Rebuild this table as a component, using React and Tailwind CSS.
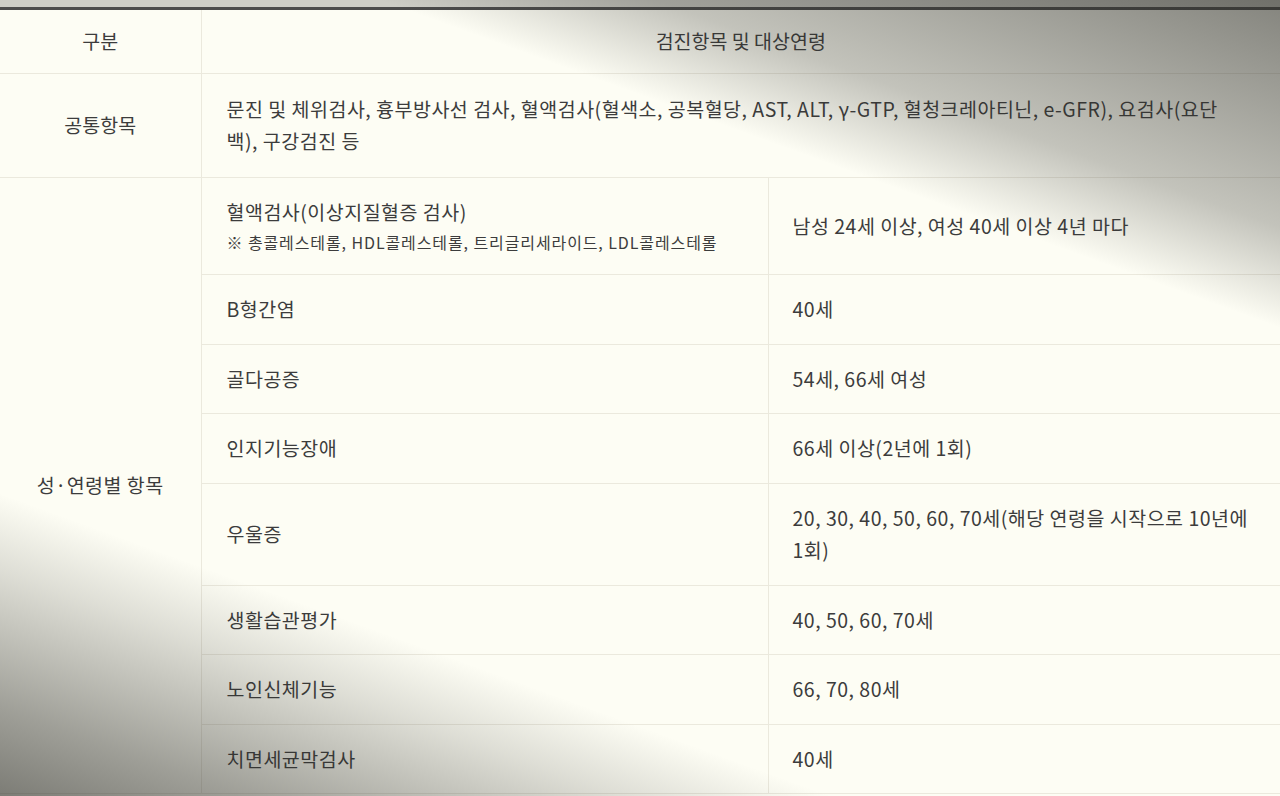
import React from 'react';

const rows = [
  { item: '혈액검사(이상지질혈증 검사)', note: '※ 총콜레스테롤, HDL콜레스테롤, 트리글리세라이드, LDL콜레스테롤', target: '남성 24세 이상, 여성 40세 이상 4년 마다' },
  { item: 'B형간염', target: '40세' },
  { item: '골다공증', target: '54세, 66세 여성' },
  { item: '인지기능장애', target: '66세 이상(2년에 1회)' },
  { item: '우울증', target: '20, 30, 40, 50, 60, 70세(해당 연령을 시작으로 10년에 1회)' },
  { item: '생활습관평가', target: '40, 50, 60, 70세' },
  { item: '노인신체기능', target: '66, 70, 80세' },
  { item: '치면세균막검사', target: '40세' },
];

const cell = 'border-b border-[#ebe9dd] align-middle';

export default function App() {
  return (
    <div className="relative h-[796px] w-[1280px] overflow-hidden bg-[#fdfdf4] font-['Noto_Sans_CJK_KR',sans-serif] text-[#3c3c3c] tracking-[0.5px]">
      <div className="h-[7px] bg-[#cdcdc6]" />
      <table className="w-full table-fixed border-collapse border-t-[3px] border-[#4b4b4b] text-[19.5px] leading-[32.5px]">
        <colgroup>
          <col className="w-[201px]" />
          <col className="w-[567px]" />
          <col />
        </colgroup>
        <thead>
          <tr>
            <th className={`${cell} border-r py-[15px] text-center font-normal tracking-normal`}>구분</th>
            <th colSpan={2} className={`${cell} py-[15px] text-center font-normal tracking-normal`}>검진항목 및 대상연령</th>
          </tr>
        </thead>
        <tbody>
          <tr>
            <td className={`${cell} border-r py-[18px] text-center tracking-normal`}>공통항목</td>
            <td colSpan={2} className={`${cell} py-[19px] pl-[25px] pr-[50px]`}>
              문진 및 체위검사, 흉부방사선 검사, 혈액검사(혈색소, 공복혈당, AST, ALT, γ-GTP, 혈청크레아티닌, e-GFR), 요검사(요단백), 구강검진 등
            </td>
          </tr>
          {rows.map((r, i) => (
            <tr key={r.item}>
              {i === 0 && (
                <td rowSpan={rows.length} className={`${cell} border-r text-center`}>성·연령별 항목</td>
              )}
              <td className={`${cell} border-r py-[18px] pl-[25px] pr-4`}>
                <div>{r.item}</div>
                {r.note && <div className="text-[16px] leading-[28px] tracking-[0.9px]">{r.note}</div>}
              </td>
              <td className={`${cell} py-[18px] pl-[24px] pr-[20px]`}>{r.target}</td>
            </tr>
          ))}
        </tbody>
      </table>
      <div className="pointer-events-none absolute inset-0 bg-[linear-gradient(20deg,transparent_74%,rgba(45,45,40,0.28)_82%,rgba(45,45,40,0.58)_100%),linear-gradient(200deg,transparent_76%,rgba(45,45,40,0.15)_82%,rgba(45,45,40,0.45)_93%,rgba(45,45,40,0.62)_100%)]" />
    </div>
  );
}
